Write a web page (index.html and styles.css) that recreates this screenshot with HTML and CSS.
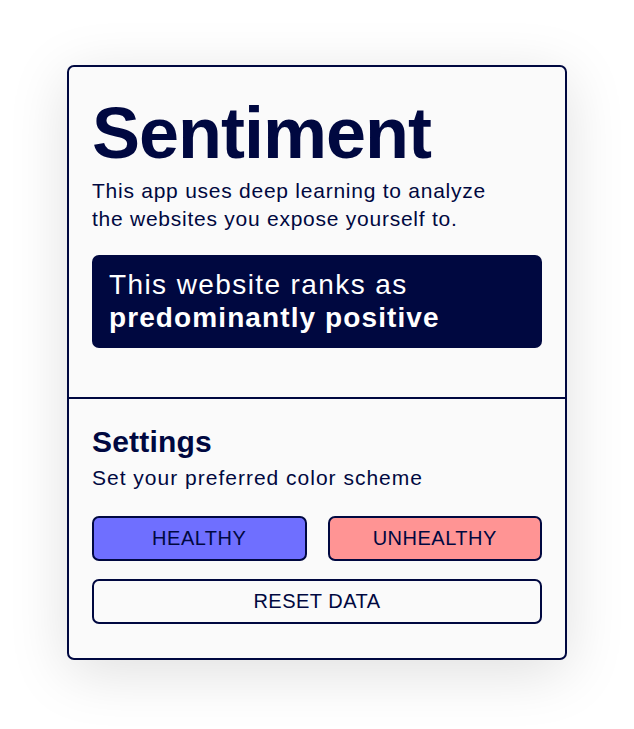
FILE: index.html
```html
<!DOCTYPE html>
<html lang="en">
<head>
<meta charset="utf-8">
<title>Sentiment</title>
<link rel="stylesheet" href="styles.css">
</head>
<body>
<main class="card">
  <section class="intro">
    <h1 class="title">Sentiment</h1>
    <p class="desc">This app uses deep learning to analyze<br>the websites you expose yourself to.</p>
    <div class="verdict">This website ranks as<br><strong>predominantly positive</strong></div>
  </section>
  <section class="settings">
    <h2 class="settings-title">Settings</h2>
    <p class="settings-desc">Set your preferred color scheme</p>
    <div class="scheme-row">
      <button class="btn btn-healthy">HEALTHY</button>
      <button class="btn btn-unhealthy">UNHEALTHY</button>
    </div>
    <button class="btn btn-reset">RESET DATA</button>
  </section>
</main>
</body>
</html>
```
FILE: styles.css
```css
html, body {
  margin: 0;
  padding: 0;
  background: #ffffff;
}
body {
  box-sizing: border-box;
  min-height: 729px;
  font-family: "Liberation Sans", Arial, sans-serif;
  color: #000840;
  padding: 65px 0 0 67px;
}
.card {
  box-sizing: border-box;
  width: 500px;
  height: 595px;
  border: 2px solid #000840;
  border-radius: 7px;
  background: #fafafa;
  box-shadow: 0 12px 60px rgba(0, 0, 0, 0.13);
  display: flex;
  flex-direction: column;
}
.intro {
  padding: 26px 23px 49px 23px;
  border-bottom: 2px solid #000840;
}
.title {
  margin: 0;
  font-size: 72px;
  line-height: 80px;
  font-weight: 700;
  letter-spacing: -1px;
}
.desc {
  margin: 4px 0 0 0;
  font-size: 21px;
  line-height: 28px;
  letter-spacing: 0.75px;
}
.verdict {
  margin-top: 22px;
  background: #000840;
  color: #ffffff;
  border-radius: 7px;
  padding: 13px 17px 14px 17px;
  font-size: 28px;
  line-height: 33px;
  letter-spacing: 1.4px;
}
.verdict strong {
  font-weight: 700;
  letter-spacing: 1.1px;
}
.settings {
  padding: 27px 23px 34px 23px;
}
.settings-title {
  margin: 0;
  font-size: 30px;
  line-height: 32px;
  font-weight: 700;
  letter-spacing: 0.2px;
}
.settings-desc {
  margin: 6px 0 0 0;
  font-size: 21px;
  line-height: 28px;
  letter-spacing: 1px;
}
.scheme-row {
  margin-top: 24px;
  display: grid;
  grid-template-columns: 1fr 1fr;
  gap: 21px;
}
.btn {
  box-sizing: border-box;
  height: 45px;
  border: 2px solid #000840;
  border-radius: 7px;
  font-family: "Liberation Sans", Arial, sans-serif;
  font-size: 20px;
  letter-spacing: 0.5px;
  color: #000840;
  background: #fafafa;
  padding: 0;
}
.btn-healthy {
  background: #6f6fff;
}
.btn-unhealthy {
  background: #ff9494;
}
.btn-reset {
  display: block;
  width: 100%;
  margin-top: 18px;
}
```
